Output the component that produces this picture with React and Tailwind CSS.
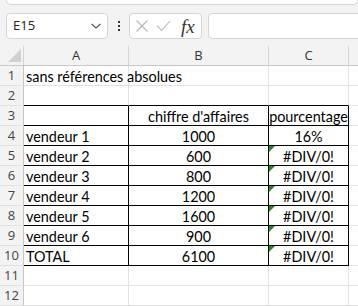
import React from 'react';

const cols = [
  { key: 'A', w: 'w-[105px]' },
  { key: 'B', w: 'w-[140px]' },
  { key: 'C', w: 'w-[80px]' },
];

const rows = [
  ['sans références absolues', '', ''],
  ['', '', ''],
  ['', "chiffre d'affaires", 'pourcentage'],
  ['vendeur 1', '1000', '16%'],
  ['vendeur 2', '600', '#DIV/0!'],
  ['vendeur 3', '800', '#DIV/0!'],
  ['vendeur 4', '1200', '#DIV/0!'],
  ['vendeur 5', '1600', '#DIV/0!'],
  ['vendeur 6', '900', '#DIV/0!'],
  ['TOTAL', '6100', '#DIV/0!'],
  ['', '', ''],
  ['', '', ''],
];

function Cell({ r, c, value }) {
  // rows 3..10 are the framed table; row 2 carries the top edge
  const inTable = r >= 3 && r <= 10;
  const bottomBlack = r >= 2 && r <= 10;
  const rightBlack = inTable;
  const center = c > 0 && r >= 3;
  const warn = c === 2 && r >= 5 && r <= 10;
  return (
    <div
      className={`relative h-[20px] shrink-0 flex items-end border-r border-b ${cols[c].w} ${
        bottomBlack ? 'border-b-black' : 'border-b-[#e1e1e1]'
      } ${rightBlack ? 'border-r-black' : 'border-r-[#e1e1e1]'} ${center ? 'justify-center' : 'pl-[2px]'}`}
    >
      {warn && (
        <div className="absolute left-0 top-0 w-0 h-0 border-t-[6px] border-t-[#1e8a1e] border-r-[6px] border-r-transparent" />
      )}
      <span className="whitespace-nowrap leading-[16px] text-[14.4px] text-black">{value}</span>
    </div>
  );
}

export default function App() {
  return (
    <div className="w-[358px] h-[306px] overflow-hidden bg-[#f3f3f3] font-['Lato','Open_Sans',sans-serif]">
      <div className="ml-[6px] h-[5px] rounded-b-[5px] border border-t-0 border-[#d6d6d6] bg-white" />

      <div className="flex items-center h-[26px] mt-[8px] font-['Open_Sans',sans-serif]">
        <div className="ml-[6px] w-[102px] h-full shrink-0 rounded-[4px] border border-[#d4d4d4] bg-white flex items-center justify-between pl-[6px] pr-[5px]">
          <span className="text-[13px] text-[#222]">E15</span>
          <svg width="12" height="8" viewBox="0 0 12 8" fill="none">
            <path d="M1.5 2 L6 6 L10.5 2" stroke="#555" strokeWidth="1.2" />
          </svg>
        </div>
        <div className="w-[21px] shrink-0 flex flex-col items-center gap-[2px]">
          <span className="w-[2px] h-[2px] bg-[#333]" />
          <span className="w-[2px] h-[2px] bg-[#333]" />
          <span className="w-[2px] h-[2px] bg-[#333]" />
        </div>
        <div className="w-[73px] h-full shrink-0 rounded-[4px] border border-[#d4d4d4] bg-white flex items-center pl-[5px]">
          <svg width="14" height="14" viewBox="0 0 14 14" fill="none">
            <path d="M1.5 1.5 L12.5 12.5 M12.5 1.5 L1.5 12.5" stroke="#b5b5b5" strokeWidth="1.1" />
          </svg>
          <svg className="ml-[7px]" width="15" height="12" viewBox="0 0 15 12" fill="none">
            <path d="M1 5.5 L5.5 10.5 L14 1" stroke="#b5b5b5" strokeWidth="1.1" />
          </svg>
          <span className="ml-[10px] italic text-[19px] text-[#333] font-['Liberation_Serif',serif] leading-none">fx</span>
        </div>
        <div className="ml-[6px] h-full w-[200px] shrink-0 rounded-[4px] border border-[#d4d4d4] bg-white" />
      </div>

      <div className="mt-[7px] flex h-[20px] border-b border-[#c8c8c8]">
        <div className="w-[24px] shrink-0 border-r border-[#d4d4d4] relative">
          <div className="absolute right-[2px] bottom-[3px] w-0 h-0 border-b-[13px] border-b-[#d0d0d0] border-l-[13px] border-l-transparent" />
        </div>
        {cols.map((c) => (
          <div
            key={c.key}
            className={`${c.w} shrink-0 border-r border-[#d4d4d4] flex items-center justify-center text-[13px] text-[#333] font-['Open_Sans',sans-serif]`}
          >
            {c.key}
          </div>
        ))}
        <div className="flex-1" />
      </div>

      {rows.map((row, i) => (
        <div key={i} className="flex bg-white">
          <div className="w-[24px] h-[20px] shrink-0 bg-[#f3f3f3] border-r border-b border-r-[#c8c8c8] border-b-[#e1e1e1] flex items-center justify-center text-[13px] text-[#444] font-['Open_Sans',sans-serif]">
            {i + 1}
          </div>
          {row.map((v, c) => (
            <Cell key={c} r={i + 1} c={c} value={v} />
          ))}
          <div className="flex-1 h-[20px] border-b border-[#e1e1e1]" />
        </div>
      ))}
    </div>
  );
}
